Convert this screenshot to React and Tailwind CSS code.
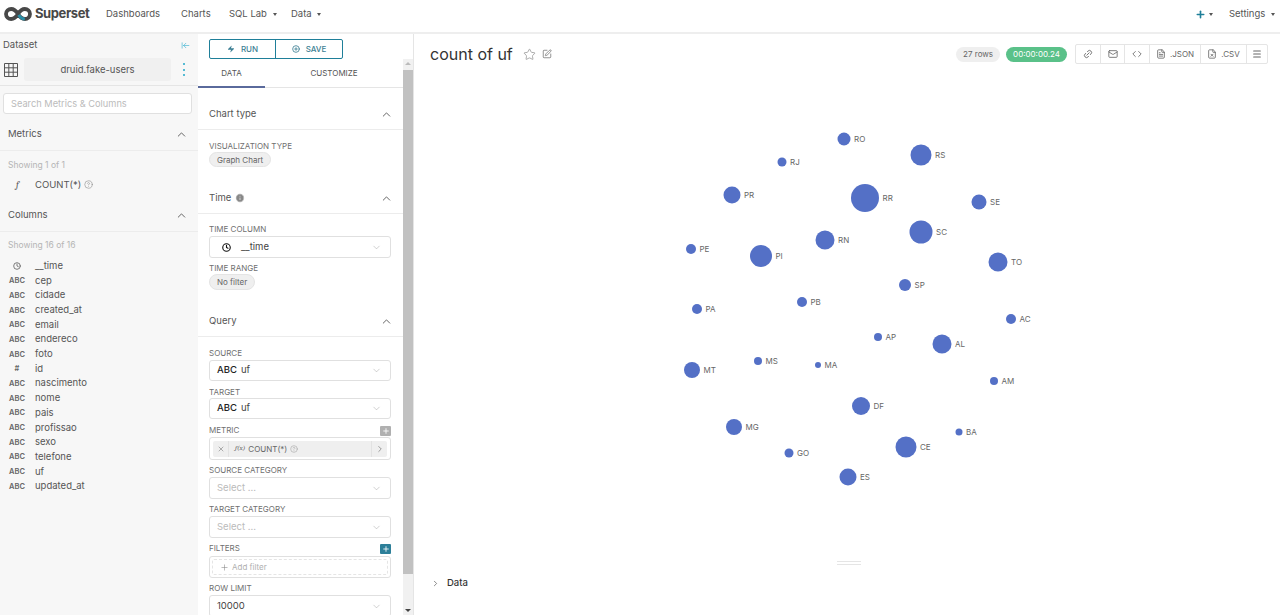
import { ChevronUp, ChevronDown, ChevronRight, Zap, CirclePlus, Clock, Info, CircleHelp, Star, SquarePen, Link2, Mail, Code, FileText, FileX, Menu, Plus, X, ArrowLeftToLine } from 'lucide-react'

const font = { fontFamily: 'Inter, "Noto Sans", sans-serif' }

const columns = [
  ['clock', '__time'], ['ABC', 'cep'], ['ABC', 'cidade'], ['ABC', 'created_at'], ['ABC', 'email'], ['ABC', 'endereco'],
  ['ABC', 'foto'], ['#', 'id'], ['ABC', 'nascimento'], ['ABC', 'nome'], ['ABC', 'pais'], ['ABC', 'profissao'],
  ['ABC', 'sexo'], ['ABC', 'telefone'], ['ABC', 'uf'], ['ABC', 'updated_at'],
]

// x, y are relative to the chart svg (page coords minus 414, 70)
const nodes = [
  ['RO', 430, 69, 6.5], ['RS', 507, 85, 10.5], ['RJ', 368, 92, 4.5], ['PR', 318, 125, 8.5], ['RR', 451, 128, 14],
  ['SE', 565, 132, 7.5], ['SC', 507, 162, 11.5], ['RN', 411, 170, 9.5], ['PE', 277, 179, 5], ['PI', 347, 186, 11],
  ['TO', 584, 192, 9.5], ['SP', 491, 215, 6], ['PB', 388, 232, 5], ['PA', 283, 239, 5], ['AC', 597, 249, 5],
  ['AP', 464, 267, 4], ['AL', 528, 274, 9.5], ['MS', 344, 291, 4], ['MA', 404, 295, 3], ['MT', 278, 300, 8],
  ['AM', 580, 311, 4], ['DF', 447, 336, 9], ['MG', 320, 357, 8], ['BA', 545, 362, 3.5], ['CE', 492, 377, 10.5],
  ['GO', 375, 383, 4.5], ['ES', 434, 407, 8.5],
]

function Caret() {
  return <span className="ml-[3px] inline-block border-x-[2.5px] border-t-[3px] border-x-transparent border-t-[#555] align-middle" />
}

function Section({ title, extra, className = 'h-[32px] pl-[11px]' }) {
  return (
    <div className={`flex items-center justify-between border-b border-[#ececec] pr-[10px] pt-px ${className}`}>
      <span className="flex items-center gap-1 text-[9.5px] text-[#555]">
        {title}
        {extra}
      </span>
      <ChevronUp size={13} strokeWidth={1.5} className="text-[#444]" />
    </div>
  )
}

function FieldLabel({ children, className = '' }) {
  return <div className={`text-[8px] leading-[11px] text-[#6f6f6f] ${className}`}>{children}</div>
}

function Select({ children, className = 'h-[22px]' }) {
  return (
    <div className={`flex items-center justify-between rounded-[3px] border border-[#e0e0e0] bg-white pl-[7px] pr-[8px] text-[9.5px] ${className}`}>
      <span className="flex items-center">{children}</span>
      <ChevronDown size={11} strokeWidth={1} className="text-[#999]" />
    </div>
  )
}

function Pill({ children, className = '' }) {
  return (
    <span className={`flex w-fit items-center rounded-full border border-[#e4e4e4] bg-[#efefef] text-[8px] text-[#666] ${className}`}>
      {children}
    </span>
  )
}

function PlusBox({ color }) {
  return (
    <span className={`flex h-[10px] w-[11px] items-center justify-center rounded-[1px] ${color}`}>
      <Plus size={8} strokeWidth={2.5} className="text-white" />
    </span>
  )
}

function ActionBtn({ children, className = '' }) {
  return (
    <div className={`flex h-full items-center justify-center gap-1 border-r border-[#e5e5e5] text-[8px] text-[#666] last:border-r-0 ${className}`}>
      {children}
    </div>
  )
}

function LogoMark() {
  return (
    <svg width="28" height="14" viewBox="0 0 28 14" fill="none">
      <path d="M14 7c-1.500-2.400-3.400-5-6.800-5C4.400 2 2 4.200 2 7s2.400 5 5.200 5c3.400 0 5.300-2.600 6.800-5s3.400-5 6.800-5C23.600 2 26 4.200 26 7s-2.400 5-5.200 5c-3.400 0-5.300-2.600-6.800-5" stroke="#484848" strokeWidth="3.800" />
      <path d="M14.600 8c1.300 2 3 4 6.200 4" stroke="#2b8fa8" strokeWidth="3" />
    </svg>
  )
}

export default function App() {
  return (
    <div style={font} className="flex h-[615px] w-[1280px] flex-col overflow-hidden bg-white text-[#333]">
      {/* Top nav */}
      <header className="flex h-[34px] shrink-0 items-center border-b-2 border-[#eeeeee] pb-[4px] pl-[4px] pr-[5px] text-[9.5px] text-[#555]">
        <LogoMark />
        <span className="ml-[3px] w-[71px] text-[13px] font-bold tracking-[-0.4px] text-[#484848]">Superset</span>
        <span className="w-[75px]">Dashboards</span>
        <span className="w-[48px]">Charts</span>
        <span className="w-[62px]">SQL Lab <Caret /></span>
        <span>Data <Caret /></span>
        <span className="ml-auto flex items-center">
          <Plus size={11} strokeWidth={3.5} className="text-[#1f7f99]" />
          <Caret />
        </span>
        <span className="ml-[16px]">Settings <Caret /></span>
      </header>

      <div className="flex min-h-0 flex-1">
        {/* Dataset panel */}
        <aside className="w-[198px] shrink-0 bg-[#f7f7f7]">
          <div className="flex h-[22px] items-center justify-between pl-[3px] pr-[8px]">
            <span className="text-[9.5px] text-[#555]">Dataset</span>
            <ArrowLeftToLine size={9} strokeWidth={1.5} className="text-[#20a7c9]" />
          </div>
          <div className="flex h-[30px] items-end border-b border-[#e5e5e5] pb-[4px] pl-[4px]">
            <svg width="14" height="14" viewBox="0 0 14 14" fill="none" stroke="#555" strokeWidth="1" className="mb-[4px]">
              <path d="M.5.5h13v13H.5zM.5 4.800h13M.5 9.200h13M4.800.5v13M9.200.5v13" />
            </svg>
            <div className="ml-[6px] flex h-[23px] w-[147px] items-center justify-center rounded-[3px] bg-[#f0f0f0] pt-px text-[9.5px] text-[#555]">
              druid.fake-users
            </div>
            <div className="mb-[5px] ml-[12px] flex h-[13px] flex-col justify-between">
              <span className="h-[2px] w-[2px] rounded-full bg-[#20a7c9]" />
              <span className="h-[2px] w-[2px] rounded-full bg-[#20a7c9]" />
              <span className="h-[2px] w-[2px] rounded-full bg-[#20a7c9]" />
            </div>
          </div>
          <div className="pl-[3px] pr-[6px] pt-[7px]">
            <div className="flex h-[21px] items-center rounded-[3px] border border-[#e0e0e0] bg-white pl-[7px] text-[9.25px] text-[#bbbbbb]">
              Search Metrics &amp; Columns
            </div>
          </div>
          <Section title="Metrics" className="mt-[4px] h-[33px] pl-[8px]" />
          <div className="h-[48px] pl-[8px] pt-[8px] text-[8.5px] text-[#b5b5b5]">
            <div>Showing 1 of 1</div>
            <div className="mt-[6px] flex items-center text-[9.5px] text-[#555]">
              <span className="w-[27px] pl-[8px] font-serif italic">f</span>
              COUNT(*)
              <CircleHelp size={9} strokeWidth={1.5} className="ml-[3px] text-[#888]" />
            </div>
          </div>
          <Section title="Columns" className="h-[33px] pl-[8px]" />
          <div className="pl-[8px] pt-[7px]">
            <div className="mb-[7px] text-[8.5px] text-[#b5b5b5]">Showing 16 of 16</div>
            {columns.map(([type, name]) => (
              <div key={name} className="flex h-[14.7px] items-center text-[9.5px] text-[#555]">
                <span className="flex w-[27px] justify-center pr-[9px] text-[7.5px] font-semibold text-[#666]">
                  {type === 'clock' ? <Clock size={8} strokeWidth={2.5} /> : type}
                </span>
                {name}
              </div>
            ))}
          </div>
        </aside>

        {/* Controls panel */}
        <section className="flex w-[216px] shrink-0 flex-col border-r border-[#e5e5e5]">
          <div className="flex h-[25px] items-end pl-[11px]">
            <div className="flex h-[20px] w-[134px] rounded-[2px] border border-[#1f7f99] text-[8px] font-medium text-[#3d7f94]">
              <span className="flex w-1/2 items-center justify-center gap-[6px] border-r border-[#1f7f99]">
                <Zap size={8} fill="currentColor" strokeWidth={0} />
                RUN
              </span>
              <span className="flex w-1/2 items-center justify-center gap-[6px]">
                <CirclePlus size={8} strokeWidth={2.5} />
                SAVE
              </span>
            </div>
          </div>
          <div className="flex min-h-0 flex-1">
            <div className="w-[205px] shrink-0 overflow-hidden">
              <div className="flex h-[29px] border-b border-[#e5e5e5] text-[8px] text-[#555]">
                <span className="-mb-px flex w-[67px] items-center justify-center border-b-2 border-[#5a6a9c]">DATA</span>
                <span className="flex flex-1 items-center justify-center">CUSTOMIZE</span>
              </div>
              <Section title="Chart type" className="mt-[10px] h-[32px] pl-[11px]" />
              <div className="h-[52px] pl-[11px] pr-[12px] pt-[11px]">
                <FieldLabel>VISUALIZATION TYPE</FieldLabel>
                <Pill className="h-[15px] px-[7px]">Graph Chart</Pill>
              </div>
              <Section title="Time" extra={<Info size={10} fill="#888" strokeWidth={1.5} className="text-white" />} />
              <div className="h-[91px] pl-[11px] pr-[12px] pt-[10px]">
                <FieldLabel className="mb-[1px]">TIME COLUMN</FieldLabel>
                <Select>
                  <Clock size={9} strokeWidth={3} className="ml-[5px] text-[#111]" />
                  <span className="ml-[10px] text-[#444]">__time</span>
                </Select>
                <FieldLabel className="mt-[5px]">TIME RANGE</FieldLabel>
                <Pill className="h-[16px] px-[7px]">No filter</Pill>
              </div>
              <Section title="Query" />
              <div className="pl-[11px] pr-[12px] pt-[11px]">
                <FieldLabel className="mb-[1px]">SOURCE</FieldLabel>
                <Select className="h-[21px]">
                  <b className="font-medium text-[#222]">ABC</b>
                  <span className="ml-[4px] text-[#444]">uf</span>
                </Select>
                <FieldLabel className="mt-[6px]">TARGET</FieldLabel>
                <Select className="h-[21px]">
                  <b className="font-medium text-[#222]">ABC</b>
                  <span className="ml-[4px] text-[#444]">uf</span>
                </Select>
                <div className="mt-[6px] flex items-center justify-between">
                  <FieldLabel>METRIC</FieldLabel>
                  <PlusBox color="bg-[#b0b0b0]" />
                </div>
                <div className="mt-[1px] flex h-[23px] items-center rounded-[3px] border border-[#e0e0e0] px-[3px]">
                  <div className="flex h-[16px] w-full items-center rounded-[2px] bg-[#efefef] text-[8px] text-[#666]">
                    <span className="flex h-full w-[16px] items-center justify-center border-r border-[#e2e2e2]">
                      <X size={8} strokeWidth={1.500} />
                    </span>
                    <i className="ml-[6px] font-serif text-[7px]">f(x)</i>
                    <span className="ml-[3px]">COUNT(*)</span>
                    <CircleHelp size={8} strokeWidth={1.500} className="ml-[3px] text-[#999]" />
                    <span className="ml-auto flex h-full w-[16px] items-center justify-center border-l border-[#e2e2e2]">
                      <ChevronRight size={10} strokeWidth={2} className="text-[#888]" />
                    </span>
                  </div>
                </div>
                <FieldLabel className="mb-[1px] mt-[5px]">SOURCE CATEGORY</FieldLabel>
                <Select><span className="text-[#bbbbbb]">Select ...</span></Select>
                <FieldLabel className="mb-[1px] mt-[5px]">TARGET CATEGORY</FieldLabel>
                <Select><span className="text-[#bbbbbb]">Select ...</span></Select>
                <div className="mt-[5px] flex items-center justify-between">
                  <FieldLabel>FILTERS</FieldLabel>
                  <PlusBox color="bg-[#2d7f99]" />
                </div>
                <div className="mt-[2px] h-[22px] rounded-[3px] border border-[#e0e0e0] p-[2px]">
                  <div className="flex h-full items-center rounded-[2px] border border-dashed border-[#e5e5e5] pl-[7px] text-[8px] text-[#b0b0b0]">
                    <Plus size={9} strokeWidth={1.500} className="mr-[3px] text-[#888]" />
                    Add filter
                  </div>
                </div>
                <FieldLabel className="mb-[1px] mt-[5px]">ROW LIMIT</FieldLabel>
                <Select><span className="text-[#444]">10000</span></Select>
              </div>
            </div>
            {/* Scrollbar */}
            <div className="flex w-[10px] flex-col items-center bg-[#f1f1f1]">
              <span className="mt-[3px] border-x-[3px] border-b-[3px] border-x-transparent border-b-[#bbbbbb]" />
              <div className="mt-[5px] h-[504px] w-full bg-[#c1c1c1]" />
              <span className="mb-[3px] mt-auto border-x-[3px] border-t-[3px] border-x-transparent border-t-[#444]" />
            </div>
          </div>
        </section>

        {/* Chart area */}
        <main className="flex min-w-0 flex-1 flex-col">
          <div className="flex h-[36px] shrink-0 items-center pl-[16px] pr-[12px] pt-[4px]">
            <h1 className="text-[16px] leading-[26px] text-[#333]">count of uf</h1>
            <Star size={13} strokeWidth={1.500} className="ml-[10px] text-[#999]" />
            <SquarePen size={10} strokeWidth={1.500} className="ml-[6px] text-[#555]" />
            <div className="ml-auto flex items-center">
              <Pill className="h-[15px] border-0 px-[7px] text-[#666]">27 rows</Pill>
              <span className="ml-[6px] flex h-[15px] items-center rounded-full bg-[#5ac189] px-[7px] text-[8px] text-white">00:00:00.24</span>
              <div className="ml-[8px] flex h-[20px] items-center rounded-[2px] border border-[#e5e5e5]">
                <ActionBtn className="w-[25px]"><Link2 size={10} className="-rotate-45" /></ActionBtn>
                <ActionBtn className="w-[24px]"><Mail size={10} /></ActionBtn>
                <ActionBtn className="w-[25px]"><Code size={10} /></ActionBtn>
                <ActionBtn className="w-[51px]"><FileText size={10} />.JSON</ActionBtn>
                <ActionBtn className="w-[46px]"><FileX size={10} />.CSV</ActionBtn>
                <ActionBtn className="w-[20px]"><Menu size={10} strokeWidth={2.5} /></ActionBtn>
              </div>
            </div>
          </div>
          <svg width="866" height="491" viewBox="0 0 866 491" className="shrink-0">
            {nodes.map(([name, x, y, r]) => (
              <g key={name}>
                <circle cx={x} cy={y} r={r} fill="#5470c6" />
                <text x={x + r + 3.5} y={y + 3} fontSize="8" fill="#666" style={font}>{name}</text>
              </g>
            ))}
          </svg>
          <div className="flex justify-center pl-[4px]">
            <div className="h-[4px] w-[24px] border-y border-[#e5e5e5]" />
          </div>
          <div className="flex h-[36px] items-center pl-[17px] pt-px text-[9.500px] text-[#333]">
            <ChevronRight size={9} strokeWidth={1.500} />
            <span className="ml-[7px] font-medium">Data</span>
          </div>
        </main>
      </div>
    </div>
  )
}
